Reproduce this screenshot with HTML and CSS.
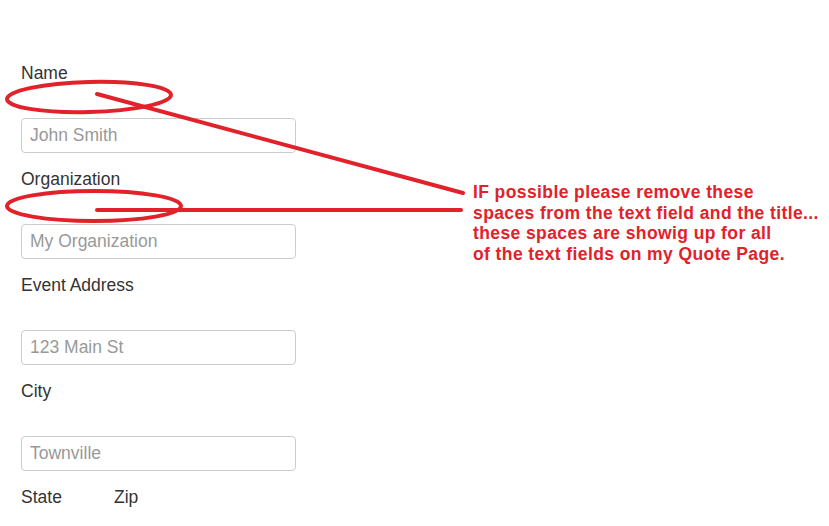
FILE: index.html
```html
<!DOCTYPE html>
<html>
<head>
<meta charset="utf-8">
<link rel="stylesheet" href="styles.css">
</head>
<body>
<form class="quote-form">
  <div class="group">
    <label class="label">Name</label>
    <div class="spacer"></div>
    <input class="field" type="text" placeholder="John Smith">
  </div>
  <div class="group">
    <label class="label">Organization</label>
    <div class="spacer"></div>
    <input class="field" type="text" placeholder="My Organization">
  </div>
  <div class="group">
    <label class="label">Event Address</label>
    <div class="spacer"></div>
    <input class="field" type="text" placeholder="123 Main St">
  </div>
  <div class="group">
    <label class="label">City</label>
    <div class="spacer"></div>
    <input class="field" type="text" placeholder="Townville">
  </div>
  <div class="row">
    <label class="label state">State</label>
    <label class="label">Zip</label>
  </div>
</form>

<svg class="marks" width="829" height="526" viewBox="0 0 829 526">
  <ellipse cx="89" cy="97" rx="82" ry="15" fill="none" stroke="#e2222a" stroke-width="4" transform="rotate(-1.5 89 97)"/>
  <line x1="97" y1="94" x2="463" y2="193" stroke="#e2222a" stroke-width="4" stroke-linecap="round"/>
  <ellipse cx="94" cy="206" rx="87" ry="15" fill="none" stroke="#e2222a" stroke-width="4"/>
  <line x1="97" y1="210" x2="461" y2="210" stroke="#e2222a" stroke-width="4" stroke-linecap="round"/>
</svg>

<div class="note">IF possible please remove these<br>spaces from the text field and the title...<br>these spaces are showig up for all<br>of the text fields on my Quote Page.</div>
</body>
</html>
```

FILE: styles.css
```css
html, body {
  margin: 0;
  padding: 0;
  background: #ffffff;
  width: 829px;
  height: 526px;
  overflow: hidden;
}
body {
  position: relative;
  font-family: "Liberation Sans", Arial, sans-serif;
}
.quote-form {
  padding: 63px 0 0 21px;
  display: flex;
  flex-direction: column;
}
.group {
  display: flex;
  flex-direction: column;
  margin-bottom: 16px;
}
.label {
  display: block;
  font-size: 17.5px;
  line-height: 20px;
  height: 20px;
  color: #333333;
}
.spacer {
  height: 35px;
}
.field {
  box-sizing: border-box;
  width: 275px;
  height: 35px;
  margin: 0;
  padding: 0 8px;
  border: 1px solid #cccccc;
  border-radius: 4px;
  font-family: "Liberation Sans", Arial, sans-serif;
  font-size: 17.5px;
  color: #555555;
  background: #ffffff;
  outline: none;
}
.field::placeholder {
  color: #999999;
  opacity: 1;
}
.row {
  display: flex;
}
.state {
  width: 93px;
}
.marks {
  position: absolute;
  left: 0;
  top: 0;
  pointer-events: none;
}
.note {
  position: absolute;
  left: 473px;
  top: 182px;
  font-family: "Liberation Sans", Arial, sans-serif;
  font-weight: bold;
  font-size: 17.5px;
  line-height: 20.6px;
  letter-spacing: 0.4px;
  color: #e2222a;
  white-space: nowrap;
}
```
